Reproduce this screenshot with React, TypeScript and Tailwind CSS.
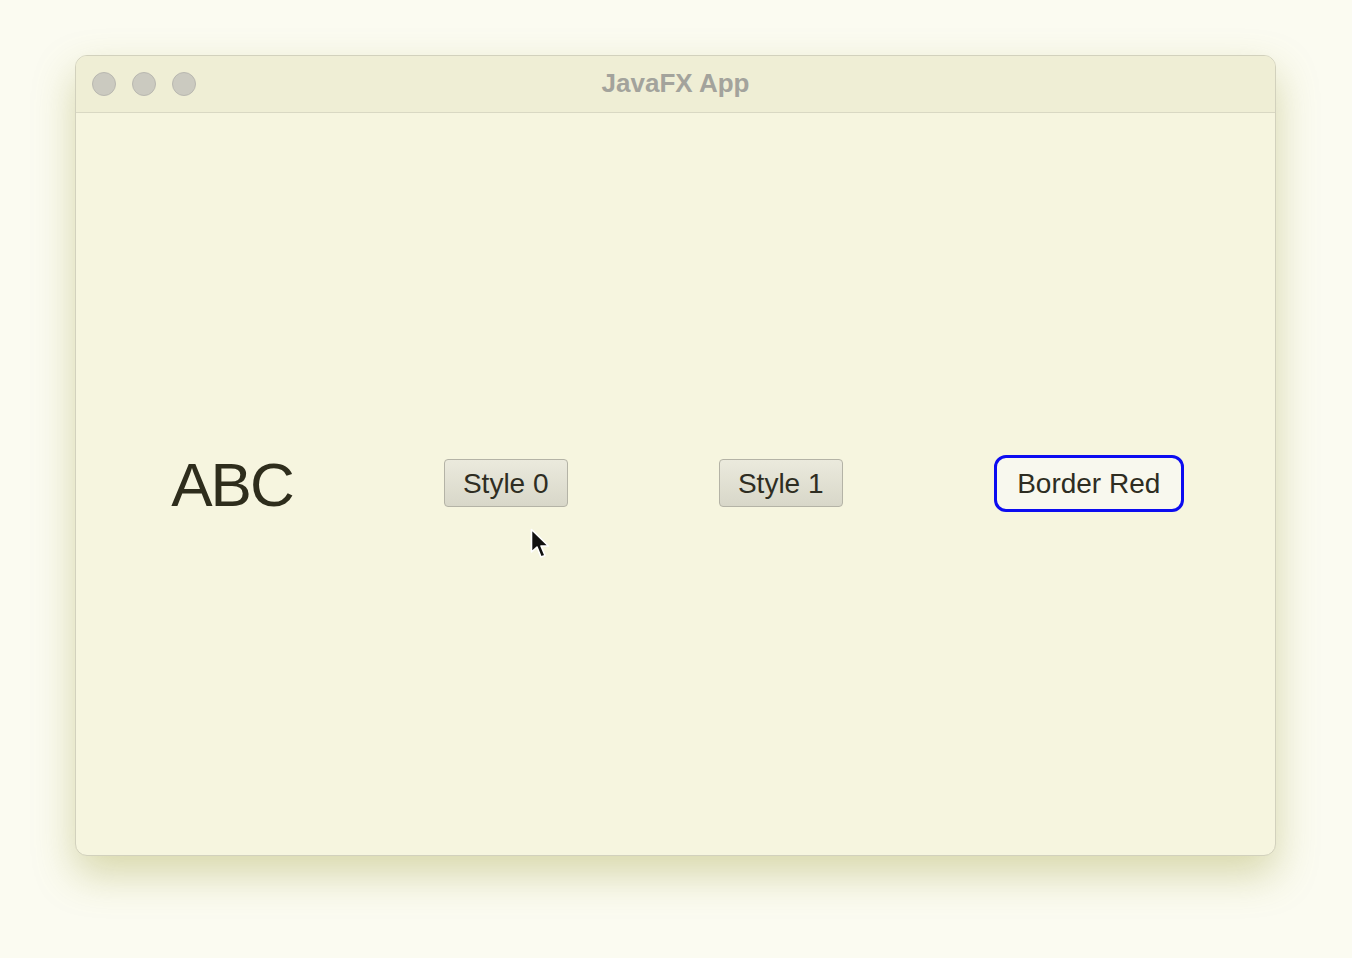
export default function App() {
  return (
    <div className="w-[1352px] h-[958px] bg-[#fbfbf1] pt-[55px] pl-[75px] font-['Liberation_Sans',Arial,sans-serif]">
      <div className="w-[1201px] h-[801px] rounded-[12px] border border-[#d2d1bd] bg-[#f6f5df] shadow-[0_18px_40px_rgba(150,150,40,0.35)] flex flex-col overflow-hidden">
        {/* title bar */}
        <div className="relative h-[57px] shrink-0 bg-[#efeed5] border-b border-[#d9d8c3] flex items-center justify-center">
          <div className="absolute left-[16px] top-[16px] flex gap-[16px]">
            <span className="w-[24px] h-[24px] rounded-full bg-[#cbcac0] border border-[#b9b8b0]" />
            <span className="w-[24px] h-[24px] rounded-full bg-[#cbcac0] border border-[#b9b8b0]" />
            <span className="w-[24px] h-[24px] rounded-full bg-[#cbcac0] border border-[#b9b8b0]" />
          </div>
          <span className="text-[26px] font-bold text-[#a3a39c] mt-[-2px]">JavaFX App</span>
        </div>

        {/* content */}
        <div className="flex-1 flex items-center justify-center gap-[151px] pb-[2px] pl-[4px]">
          <span className="text-[62px] leading-none text-[#2e2d1c] tracking-[-2px] mt-[4px]">ABC</span>
          <button className="w-[124px] h-[48px] rounded-[4px] border border-[#b4b3a6] bg-gradient-to-b from-[#ebeadd] to-[#d8d7c9] text-[28px] text-[#2e2d22] pt-[2px]">
            Style 0
          </button>
          <button className="w-[124px] h-[48px] rounded-[4px] border border-[#b4b3a6] bg-gradient-to-b from-[#ebeadd] to-[#d8d7c9] text-[28px] text-[#2e2d22] pt-[2px]">
            Style 1
          </button>
          <button className="w-[190px] h-[57px] rounded-[12px] border-[3px] border-[#0c0cf0] bg-[#f8f8ee] text-[28px] text-[#2e2d22] pt-[2px]">
            Border Red
          </button>
        </div>
      </div>

      {/* mouse pointer */}
      <svg className="absolute left-[530px] top-[528px]" width="22" height="34" viewBox="0 0 22 34">
        <path d="M1.5 1.5 L1.5 24 L7 19 L11 29 L15 27.5 L11 18 L18.5 18 Z" fill="#111" stroke="#fff" strokeWidth="1.6" strokeLinejoin="round" />
      </svg>
    </div>
  );
}
